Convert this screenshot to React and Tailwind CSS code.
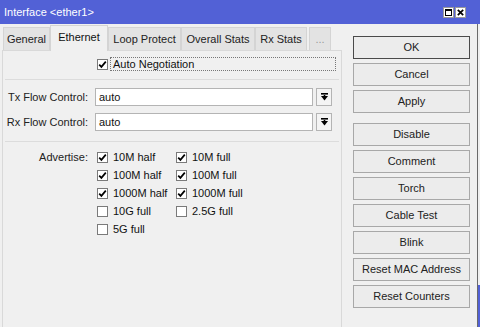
import React from "react";

function Check({ checked }) {
    return (
        <span className="w-[11px] h-[11px] border border-[#7a7a7a] bg-white flex items-center justify-center shrink-0">
            {checked && (
                <svg width="9" height="9" viewBox="0 0 9 9">
                    <path d="M1.2 4.6 L3.4 6.9 L7.8 1.6" stroke="#000" strokeWidth="1.7" fill="none" />
                </svg>
            )}
        </span>
    );
}

function DropArrow() {
    return (
        <div className="w-[16px] h-[18px] ml-[3px] border border-[#b4b4b4] bg-[#f4f4f4] flex items-center justify-center">
            <svg width="7" height="8" viewBox="0 0 7 8">
                <rect x="0" y="0" width="7" height="1.6" fill="#000" />
                <polygon points="0,3 7,3 3.5,7.5" fill="#000" />
                <rect x="2.7" y="2" width="1.6" height="2" fill="#000" />
            </svg>
        </div>
    );
}

const tabs = [
    { label: "General", w: "w-[47px]" },
    { label: "Ethernet", w: "w-[58px]", active: true },
    { label: "Loop Protect", w: "w-[73px]" },
    { label: "Overall Stats", w: "w-[74px]" },
    { label: "Rx Stats", w: "w-[52px]" },
    { label: "...", w: "w-[22px]" },
];

const advertise = [
    [{ label: "10M half", on: true }, { label: "10M full", on: true }],
    [{ label: "100M half", on: true }, { label: "100M full", on: true }],
    [{ label: "1000M half", on: true }, { label: "1000M full", on: true }],
    [{ label: "10G full", on: false }, { label: "2.5G full", on: false }],
    [{ label: "5G full", on: false }],
];

const buttons = [
    ["OK", "Cancel", "Apply"],
    ["Disable", "Comment", "Torch", "Cable Test", "Blink", "Reset MAC Address", "Reset Counters"],
];

export default function App() {
    return (
        <div className="w-[480px] h-[327px] overflow-hidden bg-[#f0f0f0] flex flex-col text-[11px] text-[#111] font-['Liberation_Sans',Arial,sans-serif] leading-none">
            {/* Title bar */}
            <div className="h-[24px] shrink-0 bg-[#5261d6] flex items-center justify-between pl-[4px] pr-[14px]">
                <span className="text-white text-[11px]">Interface &lt;ether1&gt;</span>
                <div className="flex gap-[1px]">
                    <div className="w-[11px] h-[11px] bg-white border border-[#9a9a9a] flex items-center justify-center">
                        <div className="w-[7px] h-[7px] border border-black border-t-2" />
                    </div>
                    <div className="w-[11px] h-[11px] bg-white border border-[#9a9a9a] flex items-center justify-center">
                        <svg width="7" height="7" viewBox="0 0 7 7">
                            <path d="M0.8 0.8 L6.2 6.2 M6.2 0.8 L0.8 6.2" stroke="#000" strokeWidth="1.7" />
                        </svg>
                    </div>
                </div>
            </div>

            <div className="flex flex-1">
                {/* Left tab panel */}
                <div className="w-[342px] flex flex-col pl-[2px]">
                    <div className="h-[26px] flex items-end pl-[1px] relative z-10">
                        {tabs.map((t) =>
                            t.active ? (
                                <div
                                    key={t.label}
                                    className={`${t.w} h-[26px] -mb-px bg-[#f0f0f0] border border-b-0 border-[#d4d4d4] flex items-center justify-center pb-[2px]`}
                                >
                                    {t.label}
                                </div>
                            ) : (
                                <div
                                    key={t.label}
                                    className={`${t.w} h-[23px] bg-[#e3e3e3] border border-b-0 border-[#d4d4d4] flex items-center justify-center text-[#222] ${t.label === "..." ? "ml-[2px] text-[#999]" : ""}`}
                                >
                                    {t.label}
                                </div>
                            )
                        )}
                    </div>
                    <div className="flex-1 border border-b-0 border-[#d9d9d9] flex flex-col">
                        {/* Auto negotiation */}
                        <div className="mt-[6px] h-[14px] flex items-center pl-[94px] pr-[5px]">
                            <Check checked />
                            <div className="ml-[2px] flex-1 h-[14px] border border-dotted border-[#777] flex items-center pl-[2px]">
                                Auto Negotiation
                            </div>
                        </div>

                        <div className="mt-[8px] h-px bg-[#dcdcdc] mx-[2px]" />

                        <div className="mt-[8px] h-[18px] flex items-center">
                            <span className="w-[85px] text-right text-[#222]">Tx Flow Control:</span>
                            <div className="ml-[7px] w-[218px] h-[18px] bg-white border border-[#b4b4b4] flex items-center pl-[3px]">auto</div>
                            <DropArrow />
                        </div>
                        <div className="mt-[7px] h-[18px] flex items-center">
                            <span className="w-[85px] text-right text-[#222]">Rx Flow Control:</span>
                            <div className="ml-[7px] w-[218px] h-[18px] bg-white border border-[#b4b4b4] flex items-center pl-[3px]">auto</div>
                            <DropArrow />
                        </div>

                        <div className="mt-[10px] h-px bg-[#dcdcdc] mx-[2px]" />

                        <div className="mt-[6px] flex">
                            <span className="w-[85px] h-[18px] flex items-center justify-end text-[#222]">Advertise:</span>
                            <div className="ml-[9px] flex flex-col">
                                {advertise.map((row, i) => (
                                    <div key={i} className="h-[18px] flex items-center">
                                        {row.map((c) => (
                                            <div key={c.label} className="w-[79px] flex items-center gap-[5px]">
                                                <Check checked={c.on} />
                                                <span>{c.label}</span>
                                            </div>
                                        ))}
                                    </div>
                                ))}
                            </div>
                        </div>
                    </div>
                </div>

                {/* Right button column */}
                <div className="w-[135px] flex flex-col pl-[11px] pt-[12px]">
                    {buttons.map((group, gi) => (
                        <div key={gi} className={`flex flex-col gap-[4px] ${gi === 1 ? "mt-[10px]" : ""}`}>
                            {group.map((b) => (
                                <div
                                    key={b}
                                    className={`w-[117px] h-[23px] flex items-center justify-center bg-[#ececec] text-[#222] border ${b === "OK" ? "border-[#4a4a4a]" : "border-[#a8a8a8]"}`}
                                >
                                    {b}
                                </div>
                            ))}
                        </div>
                    ))}
                </div>
                <div className="w-[3px] border-l border-[#6a6a6a] flex flex-col">
                    <div className="flex-1" />
                    <div className="h-[42px] bg-[#5261d6]" />
                </div>
            </div>
        </div>
    );
}
